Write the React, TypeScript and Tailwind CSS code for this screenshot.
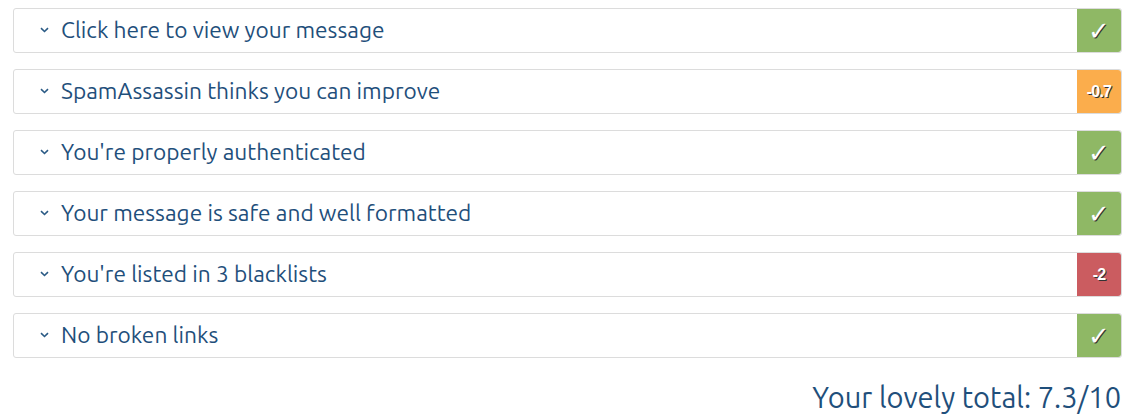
import React from 'react'

type Row = { title: string; kind: 'ok' | 'warn' | 'bad'; label?: string }

const rows: Row[] = [
  { title: 'Click here to view your message', kind: 'ok' },
  { title: 'SpamAssassin thinks you can improve', kind: 'warn', label: '-0.7' },
  { title: "You're properly authenticated", kind: 'ok' },
  { title: 'Your message is safe and well formatted', kind: 'ok' },
  { title: "You're listed in 3 blacklists", kind: 'bad', label: '-2' },
  { title: 'No broken links', kind: 'ok' },
]

function Chevron() {
  return (
    <svg width="9" height="6" viewBox="0 0 9 6" className="shrink-0">
      <path d="M1 1.2 L4.5 4.5 L8 1.2" fill="none" stroke="#2a5a85" strokeWidth="1.6" />
    </svg>
  )
}

function Badge({ row }: { row: Row }) {
  const bg =
    row.kind === 'ok' ? 'bg-[#8fb865]' : row.kind === 'warn' ? 'bg-[#fbad4c]' : 'bg-[#cb5c60]'
  return (
    <div
      className={`${bg} w-[44px] self-stretch flex items-center justify-center text-white font-bold rounded-r-[3px] [text-shadow:1px_1px_0_#333]`}
    >
      {row.label ? (
        <span className="text-[16px] leading-none font-['Liberation_Sans',sans-serif] tracking-[-0.8px]">
          {row.label}
        </span>
      ) : (
        <span className="text-[26px] leading-none font-['DejaVu_Sans',sans-serif]">✓</span>
      )}
    </div>
  )
}

export default function App() {
  return (
    <div className="bg-white w-[1137px] h-[418px] pl-[13px] pr-[15px] pt-[8px] font-['Ubuntu','Open_Sans',sans-serif]">
      <div className="flex flex-col gap-[16px]">
        {rows.map((row) => (
          <div
            key={row.title}
            className="flex items-center h-[45px] border border-[#dcdcdc] rounded-[3px] bg-white"
          >
            <div className="flex-1 flex items-center gap-[12px] pl-[26px] text-[22.7px] text-[#1f4f7b]">
              <Chevron />
              <span>{row.title}</span>
            </div>
            <Badge row={row} />
          </div>
        ))}
      </div>
      <div className="flex justify-end mt-[25px] pr-[1px]">
        <span className="text-[29px] text-[#1f4f7b] leading-none">Your lovely total: 7.3/10</span>
      </div>
    </div>
  )
}
